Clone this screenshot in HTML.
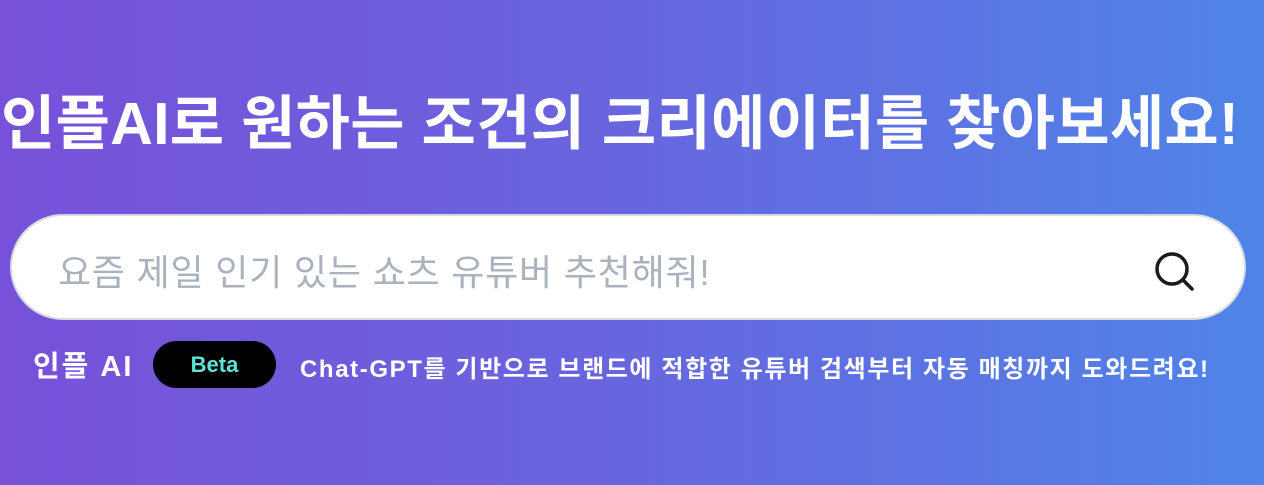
<!DOCTYPE html>
<html><head><meta charset="utf-8"><style>
*{margin:0;padding:0;box-sizing:border-box}
body{width:1264px;height:485px;overflow:hidden;background:linear-gradient(90deg,#7751d9 0%,#6a63de 45%,#4f84e8 100%);font-family:"Liberation Sans","Noto Sans CJK KR",sans-serif;position:relative;color:#fff}
h1{position:absolute;left:-12px;width:1264px;top:76px;text-align:center;font-size:59px;font-weight:700;letter-spacing:0.3px;white-space:nowrap}
.box{position:absolute;left:10px;top:214px;width:1236px;height:106px;background:#fff;border:2px solid #d5d9e2;border-radius:53px}
.ph{position:absolute;left:46px;top:28px;font-size:36px;color:#aab2be;white-space:nowrap;letter-spacing:0.8px}
.ic{position:absolute;left:1132px;top:26px}
.lab{position:absolute;left:33px;top:343px;font-size:29px;font-weight:700;white-space:nowrap;letter-spacing:2px}
.beta{position:absolute;left:153px;top:341px;width:123px;height:47px;background:#000;border-radius:24px;color:#5fe3d9;font-size:22px;font-weight:700;text-align:center;line-height:47px}
.desc{position:absolute;left:300px;top:349px;font-size:24px;font-weight:700;white-space:nowrap;letter-spacing:1.6px}
</style></head><body>
<h1>인플AI로 원하는 조건의 크리에이터를 찾아보세요!</h1>
<div class="box"><div class="ph">요즘 제일 인기 있는 쇼츠 유튜버 추천해줘!</div>
<svg class="ic" width="60" height="60" viewBox="0 0 60 60"><circle cx="28" cy="27" r="15" fill="none" stroke="#1a1a1a" stroke-width="3.5"/><line x1="39" y1="38" x2="48" y2="47" stroke="#1a1a1a" stroke-width="3.5" stroke-linecap="round"/></svg>
</div>
<div class="lab">인플 AI</div>
<div class="beta">Beta</div>
<div class="desc">Chat-GPT를 기반으로 브랜드에 적합한 유튜버 검색부터 자동 매칭까지 도와드려요!</div>
</body></html>
